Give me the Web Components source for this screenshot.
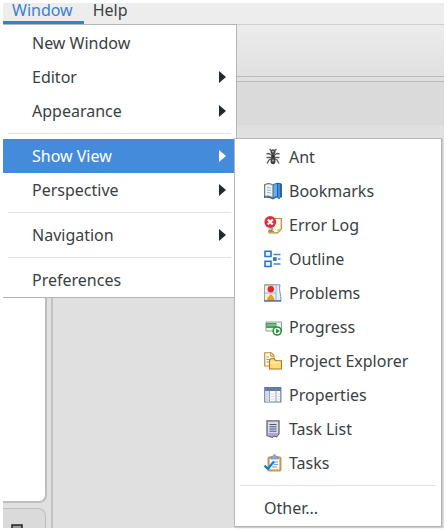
<!DOCTYPE html>
<html lang="en">
<head>
<meta charset="utf-8">
<title>Window menu</title>
<style>
  html, body { height: 100%; margin: 0; }
  body {
    background: #fff;
    color: #3a4144;
    font: 16px/24px "Noto Sans", "Open Sans", sans-serif;
  }
</style>
</head>
<body>
<ide-window>
  <menu-bar slot="menubar">
    <menu-title active>Window</menu-title>
    <menu-title>Help</menu-title>
  </menu-bar>
  <menu-panel slot="menu">
    <menu-item>New Window</menu-item>
    <menu-item arrow>Editor</menu-item>
    <menu-item arrow>Appearance</menu-item>
    <menu-separator></menu-separator>
    <menu-item arrow active>Show View
      <menu-panel slot="submenu">
        <menu-item icon="ant">Ant</menu-item>
        <menu-item icon="bookmarks">Bookmarks</menu-item>
        <menu-item icon="errorlog">Error Log</menu-item>
        <menu-item icon="outline">Outline</menu-item>
        <menu-item icon="problems">Problems</menu-item>
        <menu-item icon="progress">Progress</menu-item>
        <menu-item icon="explorer">Project Explorer</menu-item>
        <menu-item icon="properties">Properties</menu-item>
        <menu-item icon="tasklist">Task List</menu-item>
        <menu-item icon="tasks">Tasks</menu-item>
        <menu-separator></menu-separator>
        <menu-item>Other...</menu-item>
      </menu-panel>
    </menu-item>
    <menu-item arrow>Perspective</menu-item>
    <menu-separator></menu-separator>
    <menu-item arrow>Navigation</menu-item>
    <menu-separator></menu-separator>
    <menu-item>Preferences</menu-item>
  </menu-panel>
</ide-window>

<script>
const icons = {
  ant: `<g fill="none" stroke="#5c5c5c" stroke-width="1.300"><path d="M9 8 5 5.500 2.500 6M9 8l4-2.500 2.500.5M9 9.500H2.500M9 9.500h6.500M8 10.500 5 12l-2 3.500M10 10.500l3 1.500 2 3.500M7.500 3 5.500 1M10.500 3l2-2"/></g><circle cx="9" cy="3.700" r="2.500" fill="#444"/><circle cx="9" cy="3.500" r=".9" fill="#bbb"/><ellipse cx="9" cy="8" rx="1.900" ry="2" fill="#333"/><ellipse cx="9" cy="13" rx="2.500" ry="3.200" fill="#444"/><circle cx="9" cy="12.500" r="1" fill="#aaa"/>`,
  bookmarks: `<path d="M0 2.500Q4.500-.5 9 2.500 13-.5 18 2v13.500q-5-1-9 2-4-2.500-9-1.500z" fill="#34699e"/><path d="M1 3.200Q5 .8 8.500 3.500V15Q5 13 1 14z" fill="#eef6fb" stroke="#c4a862" stroke-width=".8"/><path d="M3 5.500 7 6M3 8l4 .5M3 10.500l4 .5" stroke="#7fb0d8" stroke-width=".9"/><path d="M9.500 3.500Q11 1.500 13 2v12q-2 0-3.500 1.700z" fill="#62adf0"/><path d="M13.500 1.500h3V15l-1.500 2-1.500-2z" fill="#3d8fe0" stroke="#1b559b" stroke-width=".7"/>`,
  errorlog: `<path d="M8 2.500h9.300V13l-3.600 3.800H5v-2.300h3z" fill="#fffbe6" stroke="#b98d38" stroke-width="1.200"/><path d="M13.500 16.500V13h3.500z" fill="#e5c064"/><path d="M4.500 13h5M5 15.500h5" stroke="#5b91c8" stroke-width="1.200"/><circle cx="6.300" cy="6" r="5.900" fill="#e12f37"/><path d="m3.800 3.500 5 5m0-5-5 5" stroke="#fff" stroke-width="2.100"/>`,
  outline: `<g fill="#e6f2fd" stroke="#2b76c4" stroke-width="1.600"><path d="M1 1.300h6v5.200H1zM1 11.300h6v5.200H1z"/></g><path d="M9.500 4.500h7M14 9h2.500M9.500 14h7" stroke="#4386c6" stroke-width="1.400"/><rect x="9" y="7.200" width="3.700" height="3.700" fill="#2f76bd"/>`,
  problems: `<path d="M.5.8h15.500q-1 3.500 0 7.500t1 8.500H.5z" fill="#e5edfa" stroke="#7c92bd"/><path d="M.5 17V1h9.500" fill="none" stroke="#bda05b"/><path d="M1 9h11M12 1v15.500" stroke="#9aafd3" stroke-width=".9"/><circle cx="6.800" cy="5.200" r="3.200" fill="#e3262c"/><path d="M3.800 16.300v-2l3-3.800 3 3.800v2z" fill="#f5a20a" stroke="#df7d0c" stroke-width=".7"/><path d="M0 17h17" stroke="#435f9c" stroke-width="1.200"/>`,
  progress: `<path d="M2 4h15.500v9H2z" fill="#eef4ec" stroke="#8095a7" stroke-width=".9"/><path d="M2 5h10.500v5H2z" fill="#46a354"/><path d="M3 7h9" stroke="#a7d8a9"/><circle cx="13.200" cy="13" r="4" fill="#fff" stroke="#25923a" stroke-width="1.600"/><path d="m12 10.500 4 2.500-4 2.500z" fill="#269438"/>`,
  explorer: `<path d="M.7.700h6.500L10 3.500V14H.7z" fill="#fff9df" stroke="#bb8d36" stroke-width="1.100"/><path d="M6.700.7v3.500h3" fill="none" stroke="#bb8d36"/><path d="M2.300 5h2.500M2.300 7.500h4M2.300 10h3" stroke="#78a6d0"/><path d="M5.500 17V8.200l1.200-1.500h3.600l1.300 2h5.900V17z" fill="#ffdd78" stroke="#b8701c" stroke-width="1.100"/><path d="M6.500 10.500h10" stroke="#fff0ae" stroke-width="1.500"/>`,
  properties: `<path d="M.8 1.500h16v14.500h-16z" fill="#fff" stroke="#68789c" stroke-width="1.200"/><path d="M1 2h16v3H1z" fill="#657ca8"/><path d="M1.500 5h4v10.500h-4z" fill="#d3dcef"/><path d="M5.500 5v10.500M12 5v10.500" stroke="#7c8eb4" stroke-width=".9"/><path d="M2 8h14.500M2 10.500h14.500M2 13h14.500" stroke="#c6d0e6" stroke-width=".8"/>`,
  tasklist: `<path d="M3 .8h12v13l-2.500 3-2.300-1-2 1.500L3 15.500z" fill="#d8d8ef" stroke="#66636e" stroke-width="1.300"/><path d="M5.500 4.500h7M5.500 6.800h7M5.500 9h7M5.500 11.200h7" stroke="#55556c" stroke-width="1"/><path d="M3.500 13h11l-2 3.200-2.300-1-2.200 1.300-4.500-1.500z" fill="#aaa6df"/>`,
  tasks: `<rect x="4" y="3" width="13" height="14" rx="1" fill="#d9a956" stroke="#a98149" stroke-width=".8"/><path d="M5.700 5h9.600v10.300H5.700z" fill="#f2f6fd"/><path d="M7 4V2.500h2Q9 .5 10.500.5T12 2.500h2V5H7z" fill="#94a7cf" stroke="#6f84b3" stroke-width=".6"/><path d="M10 8h4M10 10.500h4M8 13h5" stroke="#7998cc" stroke-width=".9"/><path d="m.5 11.500 3.300 3.300L10 7.500" fill="none" stroke="#167ddb" stroke-width="2.300"/>`
};

function define(name, html, setup) {
  const tpl = document.createElement("template");
  tpl.innerHTML = html;
  customElements.define(name, class extends HTMLElement {
    constructor() {
      super();
      this.attachShadow({ mode: "open" }).append(tpl.content.cloneNode(true));
    }
    connectedCallback() { if (setup) setup(this); }
  });
}

define("ide-window", `
<style>
  :host { display: grid; box-sizing: border-box; min-height: 100vh; padding: 3px; }
  .screen { position: relative; display: flex; flex-direction: column; background: #e0e0e0; }
  .toolbar { height: 51px; background: linear-gradient(#ececec, #e0e0e0); border-bottom: 1px solid #bababa; }
  .tabs { height: 43px; margin-top: 4px; border-top: 1px solid #b8b8b8; background: #dadada; }
  .work { flex: 1; display: flex; }
  .side { width: 48px; border-right: 2px solid #c2c2c2; display: flex; flex-direction: column; gap: 5px; }
  .view { width: 42px; background: #fff; border: solid #bebebe; border-width: 0 2px 2px 0; border-radius: 0 0 8px 0; flex: 1; }
  .lower { width: 42px; height: 19px; background: #dadada; border: solid #bebebe; border-width: 1px 1px 0 0; border-radius: 0 8px 0 0; display: flex; align-items: flex-end; overflow: hidden; }
  .lower svg { margin-left: 8px; }
  .menu { position: absolute; left: 0; top: 21px; width: 234px; }
</style>
<div class="screen">
  <slot name="menubar"></slot>
  <div class="toolbar"></div>
  <div class="tabs"></div>
  <div class="work">
    <div class="side">
      <div class="view"></div>
      <div class="lower"><svg width="12" height="4" viewBox="0 0 12 4"><path d="M1 4V1h10v3" fill="#999" stroke="#222" stroke-width="1.500"/></svg></div>
    </div>
  </div>
  <div class="menu"><slot name="menu"></slot></div>
</div>`);

define("menu-bar", `
<style>
  :host { display: flex; height: 21px; background: #ededed; border-bottom: 1px solid #cfcfcf; }
</style>
<slot></slot>`);

define("menu-title", `
<style>
  :host { display: flex; }
  button { font: inherit; line-height: 12px; color: inherit; border: 0; background: none; padding: 0 11px 4px 9px; border-bottom: 3px solid transparent; }
  :host([active]) button { color: #3a80d2; border-color: #3580d0; }
</style>
<button type="button"><slot></slot></button>`);

define("menu-panel", `
<style>
  :host { display: block; background: #fff; border: 1px solid #b5b5b5; border-left: 0; padding: 1px 0 0; }
  :host([slot="submenu"]) { border-left: 1px solid #b5b5b5; padding-bottom: 1px; box-shadow: 1px 1px 1px #ccc; }
</style>
<slot></slot>`);

define("menu-separator", `
<style>
  :host { display: block; padding: 5px; }
  hr { margin: 0; border: 0; border-top: 1px solid #e3e3e3; }
</style>
<hr>`);

define("menu-item", `
<style>
  :host { display: block; position: relative; }
  button { display: flex; align-items: center; width: 100%; height: 34px; margin: 0; padding: 0 10px 0 29px; border: 0; background: none; color: inherit; font: inherit; text-align: left; white-space: nowrap; }
  :host([active]) button { background: #448cdb; color: #fff; }
  .icon { display: none; width: 18px; height: 18px; margin-right: 7px; }
  :host([icon]) .icon { display: block; }
  .label { flex: 1; }
  .arrow { display: none; width: 7px; height: 12px; fill: #232a2d; }
  :host([arrow]) .arrow { display: block; }
  :host([active]) .arrow { fill: #fff; }
  .sub { position: absolute; top: -1px; left: calc(100% - 2px); width: 208px; }
</style>
<button type="button">
  <svg class="icon" viewBox="0 0 18 18" aria-hidden="true"></svg>
  <span class="label"><slot></slot></span>
  <svg class="arrow" viewBox="0 0 7 12" aria-hidden="true"><path d="M0 0 7 6 0 12z"/></svg>
</button>
<div class="sub"><slot name="submenu"></slot></div>`, el => {
  const name = el.getAttribute("icon");
  if (name) el.shadowRoot.querySelector(".icon").innerHTML = icons[name];
});
</script>
</body>
</html>
